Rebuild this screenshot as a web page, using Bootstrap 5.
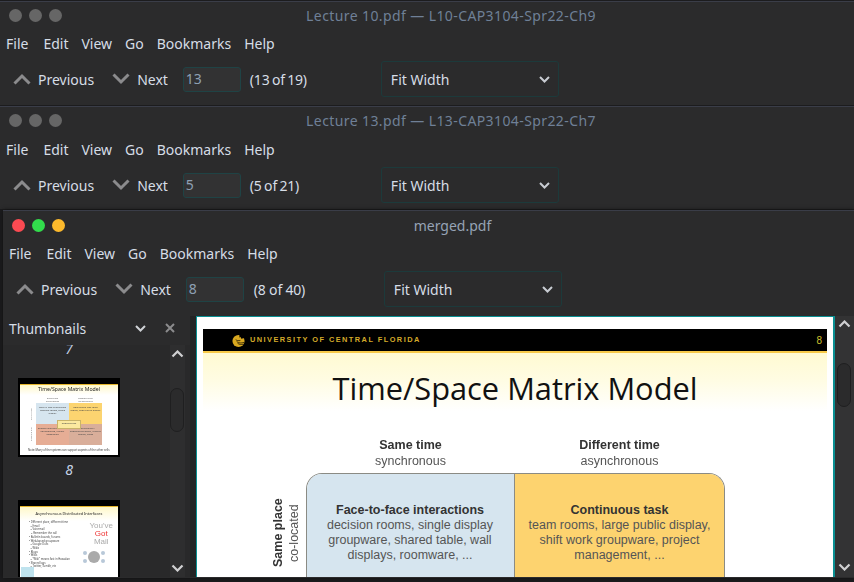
<!DOCTYPE html>
<html lang="en">
<head>
<meta charset="UTF-8">
<title>Evince windows</title>
<link rel="stylesheet" href="https://cdn.jsdelivr.net/npm/bootstrap@5.3.0/dist/css/bootstrap.min.css">
<style>
html, body { height: 100%; }
body { background: #1c1c1e; overflow: hidden; font-family: "Noto Sans", sans-serif; font-size: 14px; color: #d6dde6; position: relative; }
.win { position: absolute; background: #2b2b2c; border-top: 1px solid #3a3d48; }
.win-a { left: 0; top: 1px; width: 854px; height: 104px; }
.win-b { left: 0; top: 106px; width: 854px; height: 103px; }
.win-c { left: 3px; top: 210px; width: 851px; height: 368px; box-shadow: 0 0 4px #111; }
.titlebar { height: 27px; padding-left: 5px; position: relative; }
.win-c .titlebar { height: 29px; }
.dot { width: 13px; height: 13px; border-radius: 50%; background: #666; margin: 0 3.5px; }
.dot-r { background: #fb4a52; } .dot-g { background: #32dc4c; } .dot-y { background: #fcb92c; }
.wintitle { position: absolute; left: 48px; right: 0; top: 3px; text-align: center; color: #6f8097; font-size: 14px; letter-spacing: .4px; }
.win-c .wintitle { color: #96a3b5; top: 4px; letter-spacing: 0; }
.menubar { height: 28px; gap: 13px; padding-left: 6px; font-size: 14px; }
.menubar span:first-child { margin-right: 2px; }
.win-b .menubar { height: 30px; }
.win-c .menubar { height: 26px; }
.toolbar { height: 44px; padding-left: 13px; }
.win-b .toolbar { height: 42px; }
.win-c .toolbar { height: 50px; padding-bottom: 4px; }
.chev { width: 18px; height: 12px; fill: none; stroke: #8b8b8d; stroke-width: 3; }
.tool-lbl { margin: 0 18px 0 7px; }
.tool-next { margin-right: 15px; }
.pagebox { width: 58px; height: 25px; background: #323233; border: 1px solid #1f4345; border-radius: 3px; color: #8ea0b3; padding-left: 2px; line-height: 22px; }
.pagecount { margin-left: 9px; width: 131px; word-spacing: -1px; letter-spacing: -.2px; }
.win-c .pagecount { word-spacing: 0; margin-left: 10px; width: 130px; }
.zoombox { width: 178px; height: 36px; border: 1px solid #1c3a3b; border-radius: 3px; padding: 0 8px 0 9px; }
.zoombox svg { width: 11px; height: 7px; fill: none; stroke: #c8ccd2; stroke-width: 2; }
.docarea { height: 261px; }
.sidepane { width: 187px; flex: none; position: relative; overflow: hidden; }
.sidehead { height: 28px; padding: 0 15px 0 6px; font-size: 14px; margin: -2px 0 3px; }
.sidehead svg { flex: none; }
.chev-gap { margin-right: 19px; }
.thumbs { position: relative; height: 232px; background: #29292a; overflow: hidden; padding-left: 15px; }
.thumbnum { text-align: center; width: 102px; font-style: italic; color: #c5d3e6; font-size: 14px; line-height: 20px; }
.num-top { margin-top: -6px; height: 39px; }
.num-mid { margin-top: 3px; height: 40px; }
.thumbpic { width: 102px; height: 79px; background: #fff; border: 2px solid #000; overflow: hidden; filter: blur(.35px); position: relative; }
.th-head { height: 5px; background: #000; border-bottom: 1px solid #e5b52b; }
.th-title { font-size: 5.2px; line-height: 9px; text-align: center; color: #222; background: linear-gradient(#fff8c9, #fff); height: 10px; white-space: nowrap; }
.th-title-sm { font-size: 3.9px; line-height: 13px; height: 14px; }
.th-tops { display: grid; grid-template-columns: 33px 33px; margin: 3px 0 0 16px; height: 5px; font-size: 2.2px; line-height: 2.5px; text-align: center; color: #666; }
.th-grid { display: grid; grid-template-columns: 33px 33px; grid-template-rows: 21px 21px; margin: 0 0 0 16px; font-size: 2.4px; text-align: center; color: #444; line-height: 3px; position: relative; }
.th-grid > div { padding-top: 3px; overflow: hidden; }
.th-bl { background: #d6e5ef; } .th-or { background: #fcd470; } .th-re { background: #e6ad95; } .th-br { background: #d9ae9a; }
.th-grid .th-mid { position: absolute; left: 21px; top: 17px; width: 24px; height: 9px; background: #fbe9a0; border: 1px solid #c8b36a; padding: 1px 0 0; }
.th-side { position: absolute; left: 11px; width: 4px; height: 14px; writing-mode: vertical-rl; transform: rotate(180deg); font-size: 2.2px; line-height: 2.2px; color: #666; text-align: center; white-space: nowrap; overflow: hidden; }
.th-note { font-size: 2.7px; line-height: 4px; margin: 3px 0 0 8px; color: #333; white-space: nowrap; }
.th-list { font-size: 2.7px; line-height: 3.7px; color: #444; padding: 0 0 0 9px; width: 60px; white-space: nowrap; }
.th-got { position: absolute; right: 5px; top: 20px; font-size: 8px; line-height: 8px; text-align: center; color: #aaa; font-family: "Liberation Sans", sans-serif; }
.th-got b { color: #e33; font-weight: 400; display: block; }
.th-globe { position: absolute; left: 68px; top: 49px; width: 12px; height: 12px; border-radius: 50%; background: #aaa; box-shadow: -9px -4px 0 -4px #b8c8d8, 9px -4px 0 -4px #b8c8d8, -9px 4px 0 -4px #b8c8d8, 9px 4px 0 -4px #b8c8d8; }
.th-icon { position: absolute; left: 1px; bottom: 0; width: 13px; height: 10px; background: #bfe3ee; }
.vbar { width: 19px; flex: none; position: relative; background: #333334; }
.side-bar { position: absolute; right: 5px; top: 0; bottom: 0; width: 15px; background: #2e2e2f; }
.vbar svg, .side-bar svg { position: absolute; left: 1px; width: 13px; height: 8px; fill: none; stroke: #d0d0d2; stroke-width: 2.2; }
.vbar svg { left: 3px; }
.sb-thumb { position: absolute; width: 14px; height: 44px; border: 1px solid #1f1f20; border-radius: 7px; background: #2b2b2c; }
.pagewrap { width: 645px; flex: none; background: #232324; padding: 0 0 0 6px; }
.slide { width: 639px; height: 261px; background: #fff; border: 1px solid #0a8f92; border-bottom: 0; border-right-width: 2px; overflow: hidden; padding: 12px 6px 0 6px; }
.sl-head { height: 24px; background: #000; border-bottom: 2px solid #f7c948; color: #d4aa2a; font-family: "Liberation Sans", sans-serif; font-weight: 700; font-size: 7.4px; letter-spacing: 1.45px; padding: 0 5px 0 28px; }
.sl-head svg { width: 15px; height: 15px; margin-right: 4px; }
.sl-num { font-weight: 400; font-size: 10px; letter-spacing: 0; color: #cfc12f; }
.sl-title { height: 58px; background: linear-gradient(#fffad2, #fffce2 45%, #fff); font-family: "Open Sans", sans-serif; font-size: 30.8px; color: #111; text-align: center; line-height: 70px; }
.matrix { margin: 26px 0 0 63px; font-family: "Liberation Sans", sans-serif; font-size: 12.5px; line-height: 15px; color: #555; text-align: center; filter: blur(.3px); }
.mx-heads { display: grid; grid-template-columns: 209px 209px; margin-left: 40px; height: 36px; line-height: 16px; }
.mx-heads b, .cell b { color: #333; }
.mx-body { display: flex; }
.sidelabel { width: 40px; height: 70px; margin-top: 25px; writing-mode: vertical-rl; transform: rotate(180deg); line-height: 16px; font-size: 12.5px; text-align: center; white-space: nowrap; padding-right: 4px; }
.sidelabel b { color: #333; }
.cells { display: grid; grid-template-columns: 208px 209px; border: 1px solid #8b8b84; border-bottom: 0; border-radius: 16px 16px 0 0; overflow: hidden; height: 120px; }
.cell { padding-top: 29px; }
.cell-a { background: #d6e5ef; border-right: 1px solid #8b8b84; padding-right: 1px; }
.cell-b { background: #fdd36f; }
</style>
</head>
<body>

<div class="win win-a">
  <div class="titlebar d-flex align-items-center"><span class="dot"></span><span class="dot"></span><span class="dot"></span><div class="wintitle">Lecture 10.pdf — L10-CAP3104-Spr22-Ch9</div></div>
  <div class="menubar d-flex align-items-center"><span>File</span><span>Edit</span><span>View</span><span>Go</span><span>Bookmarks</span><span>Help</span></div>
  <div class="toolbar d-flex align-items-center">
    <svg class="chev" viewBox="0 0 18 12"><path d="M1.5 10.5 9 3l7.500 7.500"/></svg><span class="tool-lbl">Previous</span>
    <svg class="chev" viewBox="0 0 18 12"><path d="M1.500 1.500 9 9l7.500-7.500"/></svg><span class="tool-lbl tool-next">Next</span>
    <div class="pagebox">13</div><div class="pagecount">(13 of 19)</div>
    <div class="zoombox d-flex align-items-center justify-content-between"><span>Fit Width</span><svg viewBox="0 0 11 7"><path d="M1 1l4.500 4.500L10 1"/></svg></div>
  </div>
</div>

<div class="win win-b">
  <div class="titlebar d-flex align-items-center"><span class="dot"></span><span class="dot"></span><span class="dot"></span><div class="wintitle">Lecture 13.pdf — L13-CAP3104-Spr22-Ch7</div></div>
  <div class="menubar d-flex align-items-center"><span>File</span><span>Edit</span><span>View</span><span>Go</span><span>Bookmarks</span><span>Help</span></div>
  <div class="toolbar d-flex align-items-center">
    <svg class="chev" viewBox="0 0 18 12"><path d="M1.5 10.5 9 3l7.500 7.500"/></svg><span class="tool-lbl">Previous</span>
    <svg class="chev" viewBox="0 0 18 12"><path d="M1.500 1.500 9 9l7.500-7.500"/></svg><span class="tool-lbl tool-next">Next</span>
    <div class="pagebox">5</div><div class="pagecount">(5 of 21)</div>
    <div class="zoombox d-flex align-items-center justify-content-between"><span>Fit Width</span><svg viewBox="0 0 11 7"><path d="M1 1l4.500 4.500L10 1"/></svg></div>
  </div>
</div>

<div class="win win-c">
  <div class="titlebar d-flex align-items-center"><span class="dot dot-r"></span><span class="dot dot-g"></span><span class="dot dot-y"></span><div class="wintitle">merged.pdf</div></div>
  <div class="menubar d-flex align-items-center"><span>File</span><span>Edit</span><span>View</span><span>Go</span><span>Bookmarks</span><span>Help</span></div>
  <div class="toolbar d-flex align-items-center">
    <svg class="chev" viewBox="0 0 18 12"><path d="M1.5 10.5 9 3l7.500 7.500"/></svg><span class="tool-lbl">Previous</span>
    <svg class="chev" viewBox="0 0 18 12"><path d="M1.500 1.500 9 9l7.500-7.500"/></svg><span class="tool-lbl tool-next">Next</span>
    <div class="pagebox">8</div><div class="pagecount">(8 of 40)</div>
    <div class="zoombox d-flex align-items-center justify-content-between"><span>Fit Width</span><svg viewBox="0 0 11 7"><path d="M1 1l4.500 4.500L10 1"/></svg></div>
  </div>
  <div class="docarea d-flex">
    <div class="sidepane">
      <div class="sidehead d-flex align-items-center">
        <span class="flex-grow-1">Thumbnails</span>
        <svg class="chev-gap" width="11" height="7" viewBox="0 0 11 7" fill="none" stroke="#cfd2d6" stroke-width="2"><path d="M1 1l4.500 4.500L10 1"/></svg>
        <svg width="10" height="10" viewBox="0 0 10 10" fill="none" stroke="#8b8b8d" stroke-width="2"><path d="M1 1l8 8M9 1l-8 8"/></svg>
      </div>
      <div class="thumbs">
        <div class="thumbnum num-top">7</div>
        <div class="thumbpic">
          <div class="th-head"></div>
          <div class="th-title">Time/Space Matrix Model</div>
          <div class="th-tops"><div>Same time<br>synchronous</div><div>Different time<br>asynchronous</div></div>
          <div class="th-grid">
            <div class="th-bl">Face-to-face interactions decision rooms, single display</div>
            <div class="th-or">Continuous task team rooms, large public display</div>
            <div class="th-re">Remote interactions video conferencing, instant messaging</div>
            <div class="th-br">Communication + coordination email, bulletin boards, blogs</div>
            <div class="th-mid">Coordination</div>
          </div>
          <div class="th-side" style="top:27px">Same place</div>
          <div class="th-side" style="top:47px">Different place</div>
          <div class="th-note">Note: Many of the systems can support aspects of the other cells</div>
        </div>
        <div class="thumbnum num-mid">8</div>
        <div class="thumbpic">
          <div class="th-head"></div>
          <div class="th-title th-title-sm">Asynchronous Distributed Interfaces</div>
          <div class="th-list">• Different place, different time<br>&nbsp;&nbsp;– Email<br>&nbsp;&nbsp;– Voicemail<br>&nbsp;&nbsp;&nbsp;– Remember the call<br>• Bulletin boards, forums<br>• Web-based groupware<br>&nbsp;&nbsp;– Google Docs<br>&nbsp;&nbsp;– Wikis<br>• Blogs<br>• Wikis<br>&nbsp;&nbsp;– "Wiki" means fast in Hawaiian<br>• Shared logs<br>&nbsp;&nbsp;– Twitter, Tumblr, etc</div>
          <div class="th-got">You've<b>Got</b>Mail</div><div class="th-globe"></div><div class="th-icon"></div>
        </div>
        <div class="side-bar">
          <svg style="top:5px" viewBox="0 0 13 8"><path d="M1.500 6.500l5-5 5 5"/></svg>
          <div class="sb-thumb" style="top:43px;left:0"></div>
          <svg style="bottom:5px" viewBox="0 0 13 8"><path d="M1.500 1.500l5 5 5-5"/></svg>
        </div>
      </div>
    </div>
    <div class="pagewrap">
      <div class="slide">
        <div class="sl-head d-flex align-items-center">
          <svg viewBox="0 0 16 16"><circle cx="8" cy="8.500" r="6.500" fill="#d9a820"/><path fill="#000" d="M9 1h6v4l-4 1-1-2-1 1z"/><path fill="none" stroke="#000" stroke-width=".7" d="M6 9c2 2 5 2 8 1M7 11c2 1.500 4 1.500 6 1M5 7c1 1 3 1.500 5 1"/></svg>
          <span class="flex-grow-1">UNIVERSITY OF CENTRAL FLORIDA</span><span class="sl-num">8</span>
        </div>
        <div class="sl-title">Time/Space Matrix Model</div>
        <div class="matrix">
          <div class="mx-heads">
            <div><b>Same time</b><br>synchronous</div>
            <div><b>Different time</b><br>asynchronous</div>
          </div>
          <div class="mx-body">
            <div class="sidelabel"><b>Same place</b><br>co-located</div>
            <div class="cells">
              <div class="cell cell-a"><b>Face-to-face interactions</b><br>decision rooms, single display<br>groupware, shared table, wall<br>displays, roomware, ...</div>
              <div class="cell cell-b"><b>Continuous task</b><br>team rooms, large public display,<br>shift work groupware, project<br>management, ...</div>
            </div>
          </div>
        </div>
      </div>
    </div>
    <div class="vbar">
      <svg style="top:4px" viewBox="0 0 13 8"><path d="M1.500 6.500l5-5 5 5"/></svg>
      <div class="sb-thumb" style="top:47px;left:2px"></div>
      <svg style="bottom:6px" viewBox="0 0 13 8"><path d="M1.500 1.500l5 5 5-5"/></svg>
    </div>
  </div>
</div>

<script src="https://cdn.jsdelivr.net/npm/bootstrap@5.3.0/dist/js/bootstrap.bundle.min.js"></script>
</body>
</html>
